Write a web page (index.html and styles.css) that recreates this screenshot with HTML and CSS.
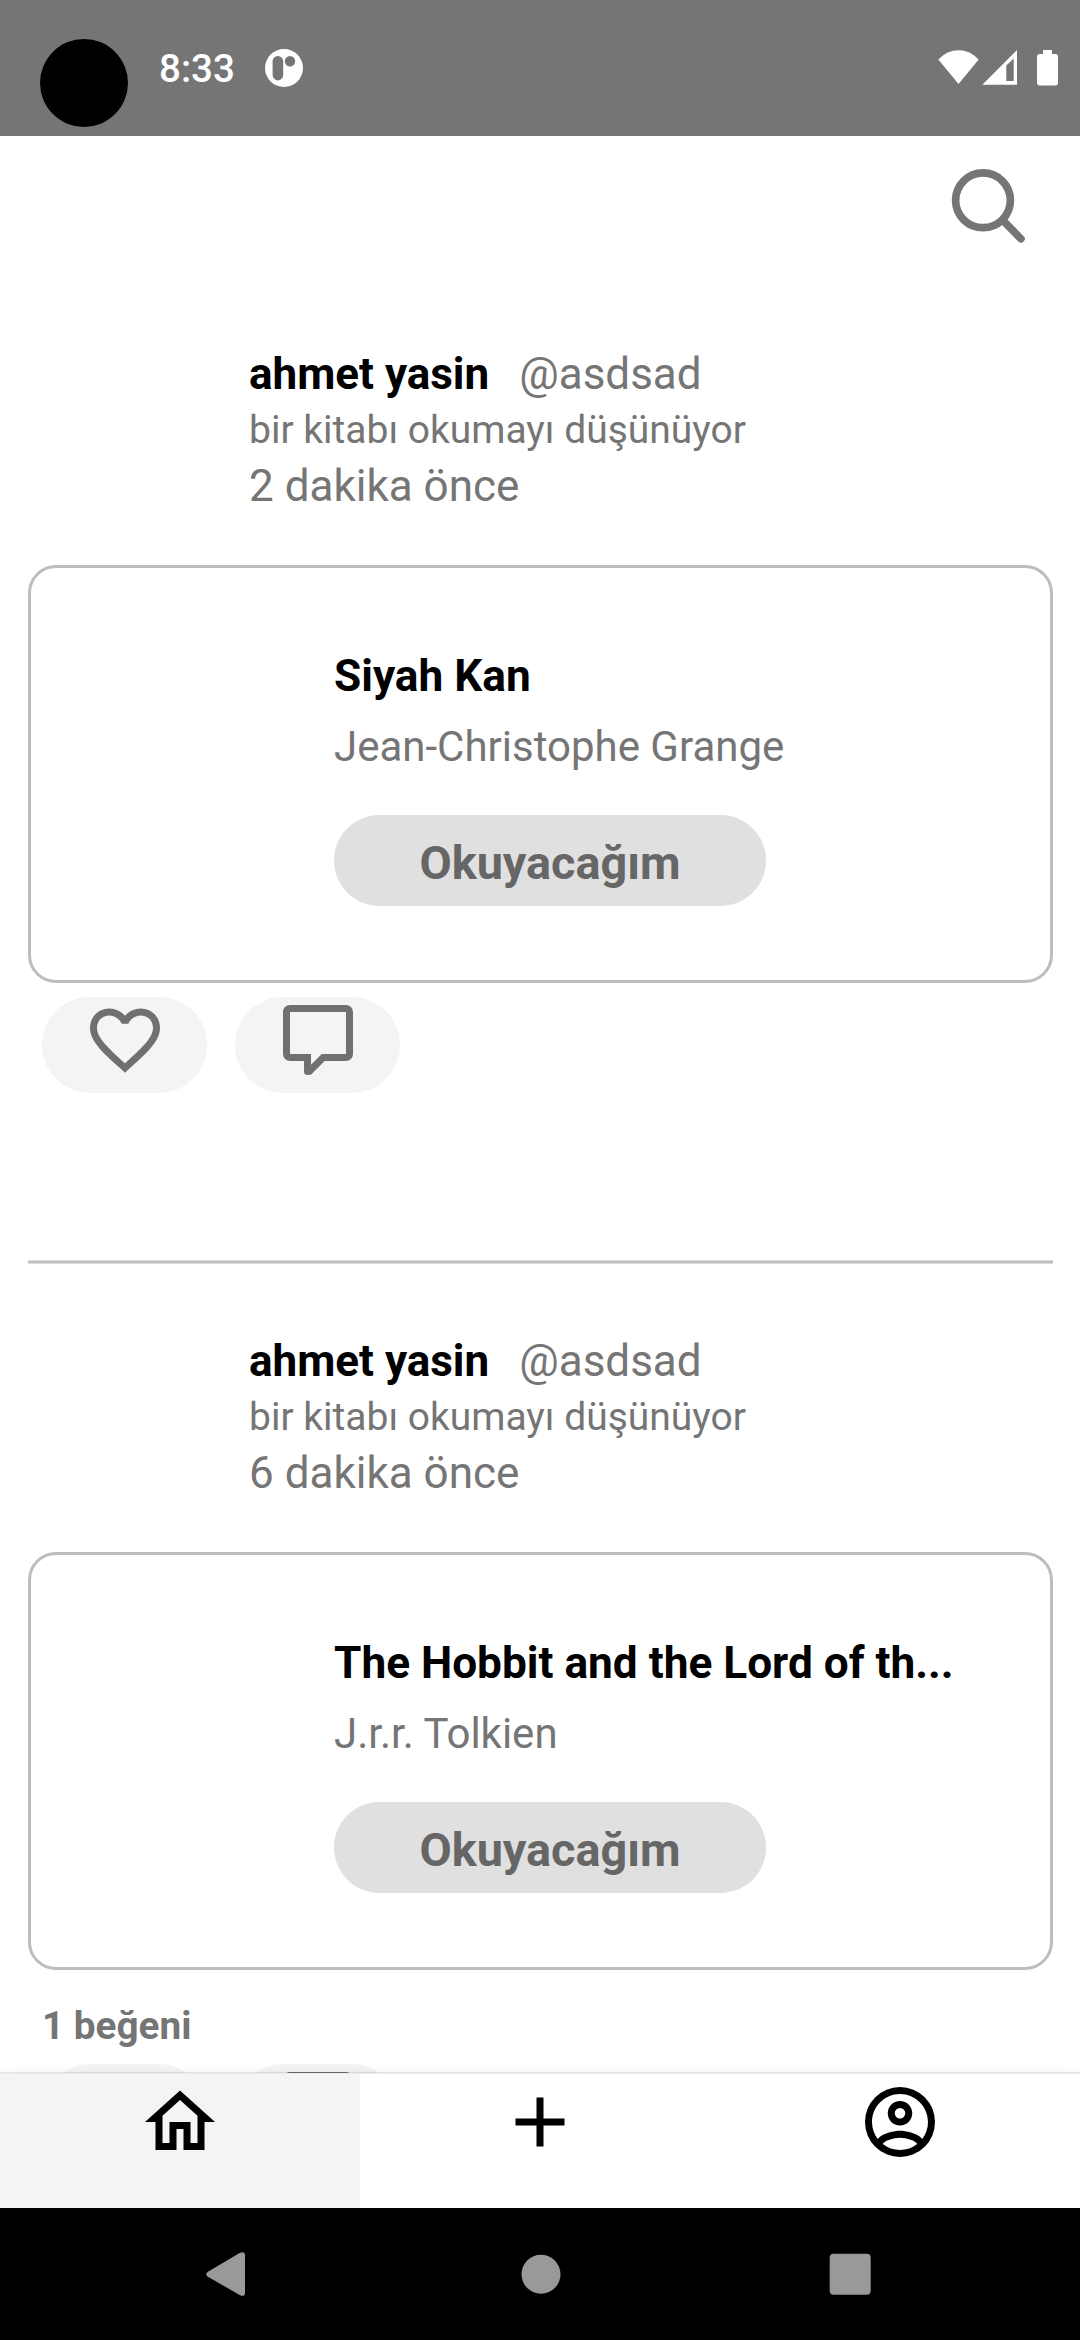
FILE: index.html
```html
<!DOCTYPE html>
<html lang="tr">
<head>
<meta charset="utf-8">
<title>Akış</title>
<link rel="stylesheet" href="styles.css">
</head>
<body>
<svg class="defs" width="0" height="0">
  <symbol id="heart" viewBox="0 0 24 24"><path d="M12.1,18.55L12,18.65L11.89,18.55C7.14,14.24 4,11.39 4,8.5C4,6.5 5.5,5 7.5,5C9.04,5 10.54,6 11.07,7.36H12.93C13.46,6 14.96,5 16.5,5C18.5,5 20,6.5 20,8.5C20,11.39 16.86,14.24 12.1,18.55M16.5,3C14.76,3 13.09,3.81 12,5.08C10.91,3.81 9.24,3 7.5,3C4.42,3 2,5.41 2,8.5C2,12.27 5.4,15.36 10.55,20.03L12,21.35L13.45,20.03C18.6,15.36 22,12.27 22,8.5C22,5.41 19.58,3 16.5,3Z"/></symbol>
  <symbol id="comment" viewBox="0 0 24 24"><path d="M9,22A1,1 0 0,1 8,21V18H4A2,2 0 0,1 2,16V4C2,2.89 2.9,2 4,2H20A2,2 0 0,1 22,4V16A2,2 0 0,1 20,18H13.9L10.2,21.71C10,21.9 9.75,22 9.5,22V22H9M10,16V19.08L13.08,16H20V4H4V16H10Z"/></symbol>
</svg>
<div class="screen">
  <header class="status">
    <span class="camera"></span>
    <span class="clock">8:33</span>
    <svg class="status-app" viewBox="0 0 38 38"><circle cx="19" cy="19" r="19" fill="#fff"/><rect x="7.6" y="7" width="10.6" height="24.4" rx="5.3" fill="#757575"/><circle cx="25" cy="12.2" r="5.2" fill="#757575"/></svg>
    <svg class="status-icons" viewBox="0 0 122 38"><g fill="#fff"><path d="M0.3 10.5Q9 1.3 20.5 1.3T40.7 10.5L20.5 35Z"/><path fill-rule="evenodd" d="M44.3 35.7L79 1V35.7ZM68.3 16.500V32H75.7V9.500Z"/><path d="M105 1h9v4h3.500q2.500 0 2.500 2.500v26q0 3-2.500 3h-15.500q-3 0-3-3v-26q0-2.500 3-2.500h3z"/></g></svg>
  </header>
  <div class="toolbar">
    <svg class="search" viewBox="0 0 84 84"><g fill="none" stroke="#757575"><circle cx="37" cy="36.300" r="27.400" stroke-width="7.700"/><path d="M57 56.500L75 74.800" stroke-width="7.600" stroke-linecap="round"/></g></svg>
  </div>
  <main class="feed">
    <article class="post">
      <div class="meta">
        <div class="names"><b class="name">ahmet yasin</b><span>@asdsad</span></div>
        <div class="action">bir kitabı okumayı düşünüyor</div>
        <div>2 dakika önce</div>
      </div>
      <section class="book">
        <h2 class="title">Siyah Kan</h2>
        <div class="author">Jean-Christophe Grange</div>
        <div class="shelf">Okuyacağım</div>
      </section>
      <div class="reactions">
        <div class="react"><svg class="icon"><use href="#heart"/></svg></div>
        <div class="react"><svg class="icon"><use href="#comment"/></svg></div>
      </div>
    </article>
    <div class="divider"></div>
    <article class="post">
      <div class="meta">
        <div class="names"><b class="name">ahmet yasin</b><span>@asdsad</span></div>
        <div class="action">bir kitabı okumayı düşünüyor</div>
        <div>6 dakika önce</div>
      </div>
      <section class="book">
        <h2 class="title">The Hobbit and the Lord of th...</h2>
        <div class="author">J.r.r. Tolkien</div>
        <div class="shelf">Okuyacağım</div>
      </section>
      <div class="likes">1 beğeni</div>
      <div class="reactions">
        <div class="react"><svg class="icon"><use href="#heart"/></svg></div>
        <div class="react"><svg class="icon"><use href="#comment"/></svg></div>
      </div>
    </article>
  </main>
  <nav class="tabs">
    <div class="tab tab-active"><svg class="icon" viewBox="0 0 24 24"><path d="M12 5.69L17 10.19V18H15V12H9V18H7V10.19L12 5.69M12 3L2 12H5V20H11V14H13V20H19V12H22"/></svg></div>
    <div class="tab"><svg class="icon" viewBox="0 0 24 24"><path d="M19,13H13V19H11V13H5V11H11V5H13V11H19V13Z"/></svg></div>
    <div class="tab"><svg class="icon" viewBox="0 0 24 24"><path d="M12,2A10,10 0 0,0 2,12A10,10 0 0,0 12,22A10,10 0 0,0 22,12A10,10 0 0,0 12,2M7.07,18.28C7.5,17.38 10.12,16.5 12,16.5C13.88,16.5 16.5,17.38 16.93,18.28C15.57,19.36 13.86,20 12,20C10.14,20 8.43,19.36 7.07,18.28M18.36,16.83C16.93,15.09 13.46,14.5 12,14.5C10.54,14.5 7.07,15.09 5.64,16.83C4.62,15.5 4,13.82 4,12C4,7.59 7.59,4 12,4C16.41,4 20,7.59 20,12C20,13.82 19.38,15.5 18.36,16.83M12,6C10.06,6 8.5,7.56 8.5,9.5C8.5,11.44 10.06,13 12,13C13.94,13 15.5,11.44 15.5,9.5C15.5,7.56 13.94,6 12,6M12,11A1.5,1.5 0 0,1 10.5,9.5A1.5,1.5 0 0,1 12,8A1.5,1.5 0 0,1 13.5,9.5A1.5,1.5 0 0,1 12,11Z"/></svg></div>
  </nav>
  <footer class="system">
    <svg class="sys-icon sys-back" viewBox="0 0 46 46"><path d="M1.500 21L34 1.800Q39 -.3 39 4.500V41.500Q39 46.300 34 44.200L1.500 25.500Q-1 23.300 1.500 21Z"/></svg>
    <svg class="sys-icon" viewBox="0 0 42 42"><circle cx="21" cy="21.300" r="19.500"/></svg>
    <svg class="sys-icon" viewBox="0 0 42 42"><rect x=".7" y=".8" width="41" height="41" rx="4"/></svg>
  </footer>
</div>
</body>
</html>
```
FILE: styles.css
```css
* { box-sizing: border-box; }
body { margin: 0; background: #fff; }
.defs { display: block; }
.screen {
  width: 1080px;
  height: 2340px;
  display: flex;
  flex-direction: column;
  overflow: hidden;
  font-family: Roboto, sans-serif;
  font-size: 44px;
  line-height: 56px;
  color: #757575;
}
.status {
  flex: none;
  height: 136px;
  padding: 39px 20px 0 40px;
  display: flex;
  align-items: flex-start;
  background: #757575;
}
.camera { width: 88px; height: 88px; border-radius: 50%; background: #000; }
.clock { margin: 7px 0 0 31px; width: 75px; font-size: 38.5px; line-height: 46px; font-weight: 500; color: #fff; }
.status-app { width: 38px; height: 38px; margin: 10px 0 0 30.5px; }
.status-icons { width: 122px; height: 38px; margin: 10px 0 0 auto; }
.toolbar {
  flex: none;
  height: 141px;
  padding: 28px 50px 0 0;
  display: flex;
  justify-content: flex-end;
}
.search { width: 84px; height: 84px; }
.feed { flex: 1; min-height: 0; overflow: hidden; padding: 0 27px 0 28px; }
.post { height: 983px; padding-top: 69px; }
.meta { padding-left: 221px; }
.names { display: flex; gap: 30px; }
.name { color: #000; }
.action { font-size: 39px; }
.book {
  height: 418px;
  margin-top: 51px;
  padding: 80px 0 0 303px;
  border: 3px solid #bdbdbd;
  border-radius: 28px;
}
.title { margin: 0; font-size: 44.2px; line-height: 56px; font-weight: 700; color: #000; white-space: nowrap; }
.author { margin-top: 17px; font-size: 42px; line-height: 52px; }
.shelf {
  width: 432px;
  height: 91px;
  margin-top: 42px;
  border-radius: 46px;
  background: #e0e0e0;
  font-size: 46.8px;
  line-height: 97px;
  font-weight: 700;
  text-align: center;
  color: #666;
}
.likes { margin: 28px 0 0 14px; height: 52px; font-size: 38.7px; line-height: 56px; font-weight: 700; }
.reactions { display: flex; gap: 28px; padding: 14px 0 0 14px; }
.react {
  width: 165px;
  height: 96px;
  padding-top: 1px;
  border-radius: 48px;
  display: flex;
  justify-content: center;
  background: #f4f4f4;
}
.icon { width: 84px; height: 84px; fill: #000; }
.react .icon { fill: #707070; }
.divider { height: 4px; background: #bdbdbd; border: solid #dedede; border-width: 1px 0; }
.tabs {
  flex: none;
  height: 136px;
  margin-top: -1px;
  display: flex;
  border-top: 2px solid rgba(0, 0, 0, .08);
  background: #fff;
  background-clip: padding-box;
  box-shadow: 0 0 10px rgba(0, 0, 0, .05);
}
.tab { flex: 1; padding-top: 6px; display: flex; justify-content: center; align-items: flex-start; }
.tab-active { background: #f4f4f4; }
.system {
  flex: none;
  height: 132px;
  padding: 0 209px 0 206px;
  display: flex;
  justify-content: space-between;
  align-items: center;
  background: #000;
}
.sys-icon { width: 42px; height: 42px; fill: #999; }
.sys-back { width: 46px; height: 46px; }
```
